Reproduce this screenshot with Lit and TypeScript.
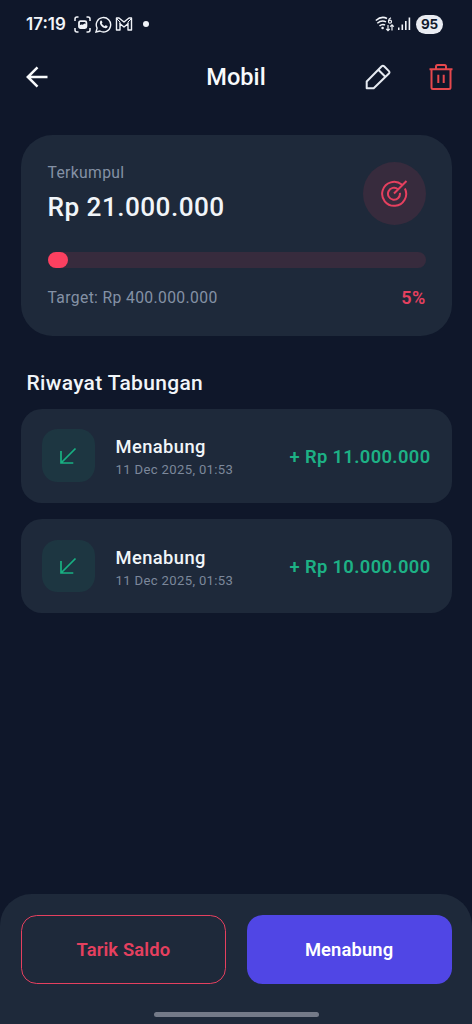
import { LitElement, html, css } from "lit";
import { customElement, property } from "lit/decorators.js";

interface Entry {
  title: string;
  date: string;
  amount: string;
}

@customElement("status-bar")
class StatusBar extends LitElement {
  static styles = css`
    :host {
      display: flex;
      justify-content: space-between;
      align-items: center;
      height: 48px;
      padding: 0 29px 0 26px;
      box-sizing: border-box;
      color: #f1f4f9;
    }
    .group {
      display: flex;
      align-items: center;
    }
    .clock {
      font: 600 17px/20px Inter, Roboto, sans-serif;
      letter-spacing: 0;
      width: 48px;
      white-space: nowrap;
    }
    .dot {
      width: 6px;
      height: 6px;
      border-radius: 50%;
      background: #f1f4f9;
      margin-left: 10px;
    }
    .battery {
      width: 27px;
      height: 19px;
      border-radius: 9.5px;
      background: #e9ecf2;
      color: #111a2c;
      font: 700 13.500px/19px Inter, Roboto, sans-serif;
      letter-spacing: -0.300px;
      text-align: center;
      margin-left: 5px;
    }
    svg {
      display: block;
    }
    .chat {
      margin-left: 4px;
    }
    .mail,
    .signal {
      margin-left: 3px;
    }
  `;

  render() {
    return html`
      <div class="group">
        <span class="clock">17:19</span>
        <svg width="17" height="17" viewBox="0 0 17 17" fill="none" stroke="currentColor" stroke-width="1.5">
          <path d="M1 5V3Q1 1 3 1h1.5M12.500 1H14q2 0 2 2v2M16 12v2q0 2-2 2h-1.500M4.500 16H3q-2 0-2-2v-2" />
          <rect x="5" y="5.200" width="7.400" height="6.800" rx="1.500" stroke-width="1.800" />
          <path d="M5.500 9.300l2-.8 1.200.3 2-1.300 1.500 1v3.500h-6.700z" fill="currentColor" stroke="none" />
        </svg>
        <svg class="chat" width="17" height="17" viewBox="0 0 17 17" fill="none" stroke="currentColor" stroke-width="1.400">
          <path d="M1 16l1.100-3.900A7.200 7.200 0 1 1 4.900 15z" />
          <path d="M5.700 4.600q.6-.4 1 .2l.7 1.500q.1.400-.7 1.300 1 1.900 2.900 2.600.8-1 1.200-.9l1.600.8q.5.300 0 1.100-1 1.300-2.600.9-3.900-1-4.900-4.800-.2-1.600.8-2.700z" fill="currentColor" stroke="none" />
        </svg>
        <svg class="mail" width="18" height="14" viewBox="0 0 18 14" fill="none" stroke="currentColor" stroke-width="1.400" stroke-linejoin="round">
          <path d="M1.500 1H4l5 4 5-4h2.500v12H13V6.800L9 10 5 6.800V13H1.500z" />
          <path d="M1.500 1.500L5 5v2M16.500 1.500L13 5v2" stroke-width="1" />
        </svg>
        <span class="dot"></span>
      </div>
      <div class="group">
        <svg width="20" height="17" viewBox="0 0 20 17" fill="none" stroke="currentColor" stroke-width="1.500">
          <path d="M.8 4.500Q6.500-.5 12 2.500M2.300 7.200Q6.500 3.600 11 5.800M4.500 9.800Q7.500 7.500 10 9" />
          <circle cx="7.600" cy="12" r="1.300" fill="currentColor" stroke="none" />
          <path d="M16 1.800q-2.500 1-2.500 3.400" stroke-width="1.200" />
          <circle cx="15" cy="5.700" r="1.500" stroke-width="1.200" />
          <path d="M13 9v5.500M11.200 12.800L13 14.700l1.800-1.900M17 14.500V9M15.200 10.700L17 8.800l1.800 1.900" stroke-width="1.200" />
        </svg>
        <svg class="signal" width="13" height="14" viewBox="0 0 13 14" fill="currentColor">
          <rect x="0" y="10.500" width="1.500" height="2.500" />
          <rect x="3.500" y="7.500" width="1.600" height="5.500" />
          <rect x="7" y="4" width="1.600" height="9" />
          <rect x="10.600" y=".5" width="1.600" height="12.500" />
        </svg>
        <span class="battery">95</span>
      </div>
    `;
  }
}

@customElement("history-item")
class HistoryItem extends LitElement {
  @property({ attribute: false }) entry!: Entry;

  static styles = css`
    :host {
      display: flex;
      align-items: center;
      height: 94.400px;
      padding: 0 21px;
      box-sizing: border-box;
      border-radius: 21px;
      background: #1e293a;
    }
    .badge {
      width: 52.500px;
      height: 52.500px;
      border-radius: 15.700px;
      background: #1d3641;
      display: grid;
      place-items: center;
      color: #18b082;
    }
    .text {
      flex: 1;
      margin-left: 21px;
      padding-top: 3px;
    }
    .title {
      font-size: 18.350px;
      line-height: 24px;
      font-weight: 500;
      letter-spacing: 0.400px;
      color: #f1f5f9;
    }
    .date {
      font-size: 13.100px;
      line-height: 18px;
      letter-spacing: 0.350px;
      color: #7c889b;
      margin-top: 2px;
    }
    .amount {
      font-size: 18.350px;
      font-weight: 600;
      letter-spacing: 0.370px;
      color: #1db185;
      white-space: nowrap;
      padding-top: 1px;
    }
  `;

  render() {
    return html`
      <div class="badge">
        <svg width="18" height="18" viewBox="0 0 18 18" fill="none" stroke="currentColor" stroke-width="1.700">
          <path d="M16.500 1.500L2 16M2 4v12h12.300" />
        </svg>
      </div>
      <div class="text">
        <div class="title">${this.entry.title}</div>
        <div class="date">${this.entry.date}</div>
      </div>
      <div class="amount">${this.entry.amount}</div>
    `;
  }
}

@customElement("app-root")
class AppRoot extends LitElement {
  private percent = 5;
  private entries: Entry[] = [
    { title: "Menabung", date: "11 Dec 2025, 01:53", amount: "+ Rp 11.000.000" },
    { title: "Menabung", date: "11 Dec 2025, 01:53", amount: "+ Rp 10.000.000" },
  ];

  static styles = css`
    :host {
      display: flex;
      flex-direction: column;
      height: 100vh;
      overflow: hidden;
      background: #0f172a;
      font-family: Roboto, sans-serif;
      color: #f1f5f9;
    }
    svg {
      display: block;
    }
    .header {
      display: grid;
      grid-template-columns: 1fr auto 1fr;
      align-items: center;
      height: 58px;
      padding: 0 18px 0 26px;
    }
    .header h1 {
      margin: 0;
      font-size: 23.600px;
      line-height: 28px;
      font-weight: 500;
      color: #f8fafc;
      transform: translateX(-4px);
    }
    .actions {
      display: flex;
      justify-content: flex-end;
      align-items: center;
      gap: 37px;
    }
    .trash {
      color: #e5484d;
    }
    .content {
      flex: 1;
      padding: 28.500px 20.500px 0 21px;
    }
    .card {
      height: 201.500px;
      box-sizing: border-box;
      border-radius: 31.500px;
      background: #1e293a;
      padding: 27px 26px 0 26.500px;
    }
    .summary {
      display: flex;
      justify-content: space-between;
    }
    .label {
      font-size: 15.700px;
      line-height: 20px;
      letter-spacing: 0.350px;
      color: #8491a5;
      margin-top: 1px;
    }
    .total {
      font-size: 26.200px;
      line-height: 32px;
      font-weight: 500;
      letter-spacing: 0.450px;
      margin-top: 8px;
    }
    .goal {
      width: 63px;
      height: 63px;
      border-radius: 50%;
      background: #372b3d;
      display: grid;
      place-items: center;
      color: #e5405f;
    }
    .track {
      height: 16px;
      border-radius: 8px;
      background: #372b3d;
      margin-top: 27.500px;
    }
    .fill {
      height: 16px;
      min-width: 20px;
      border-radius: 8px;
      background: #fb4060;
    }
    .foot {
      display: flex;
      justify-content: space-between;
      align-items: center;
      height: 24px;
      margin-top: 17.500px;
      font-size: 15.700px;
      letter-spacing: 0.360px;
      color: #8491a5;
    }
    .percent {
      font-size: 18px;
      font-weight: 600;
      letter-spacing: 0.300px;
      color: #e5405f;
    }
    h2 {
      margin: 35px 0 0 5.500px;
      font-size: 21px;
      line-height: 24px;
      font-weight: 500;
      letter-spacing: 0.330px;
    }
    .list {
      display: flex;
      flex-direction: column;
      gap: 16px;
      margin-top: 13.500px;
    }
    .bottom {
      height: 130px;
      box-sizing: border-box;
      border-radius: 31.500px 31.500px 0 0;
      background: #1e293a;
      padding: 21px 20.500px 0 21px;
    }
    .buttons {
      display: grid;
      grid-template-columns: 1fr 1fr;
      gap: 21px;
    }
    .btn {
      height: 68.500px;
      box-sizing: border-box;
      border-radius: 15.700px;
      font: 600 18.350px Roboto, sans-serif;
      letter-spacing: 0.150px;
      padding: 0;
      border: 0;
    }
    .withdraw {
      background: none;
      border: 1.300px solid #e5405f;
      color: #e5405f;
    }
    .save {
      background: #5046e5;
      color: #fff;
    }
    .handle {
      width: 165px;
      height: 5px;
      border-radius: 3px;
      background: #747a88;
      margin: 28px auto 0;
    }
  `;

  render() {
    return html`
      <status-bar></status-bar>
      <div class="header">
        <svg width="22" height="22" viewBox="0 0 22 22" fill="none" stroke="#f8fafc" stroke-width="2.500">
          <path d="M21.500 11H2.500M11.500 1.300L1.800 11l9.700 9.700" />
        </svg>
        <h1>Mobil</h1>
        <div class="actions">
          <svg width="26" height="26" viewBox="0 0 26 26" fill="none" stroke="#e6eaf1" stroke-width="2" stroke-linejoin="round">
            <path d="M1.700 24.300v-6.800L16.700 2.300q1.200-1.100 2.400 0l4.800 4.800q1.200 1.200 0 2.400L8.700 24.300zM13.300 5.800l7 7" />
          </svg>
          <svg class="trash" width="26" height="27" viewBox="0 0 26 27" fill="none" stroke="currentColor" stroke-width="2" stroke-linejoin="round">
            <path d="M1.500 5.300h23M3.500 5.300v18.200q0 1.500 1.500 1.500h16q1.500 0 1.500-1.500V5.300M8 5.300V2.700Q8 1 9.500 1h7Q18 1 18 2.700v2.600M10.300 10.700v8.300M15.700 10.700v8.300" />
          </svg>
        </div>
      </div>
      <div class="content">
        <div class="card">
          <div class="summary">
            <div>
              <div class="label">Terkumpul</div>
              <div class="total">Rp 21.000.000</div>
            </div>
            <div class="goal">
              <svg width="28" height="28" viewBox="0 0 28 28" fill="none" stroke="currentColor" stroke-width="2">
                <path d="M14 14.500L26.500 2M21.800 5.600A12 12 0 1 0 24.900 9.500M18 10.300A6 6 0 1 0 19.900 13.800" />
              </svg>
            </div>
          </div>
          <div class="track"><div class="fill" style="width:${this.percent}%"></div></div>
          <div class="foot">
            <span>Target: Rp 400.000.000</span>
            <span class="percent">${this.percent}%</span>
          </div>
        </div>
        <h2>Riwayat Tabungan</h2>
        <div class="list">
          ${this.entries.map((e) => html`<history-item .entry=${e}></history-item>`)}
        </div>
      </div>
      <div class="bottom">
        <div class="buttons">
          <button class="btn withdraw">Tarik Saldo</button>
          <button class="btn save">Menabung</button>
        </div>
        <div class="handle"></div>
      </div>
    `;
  }
}
